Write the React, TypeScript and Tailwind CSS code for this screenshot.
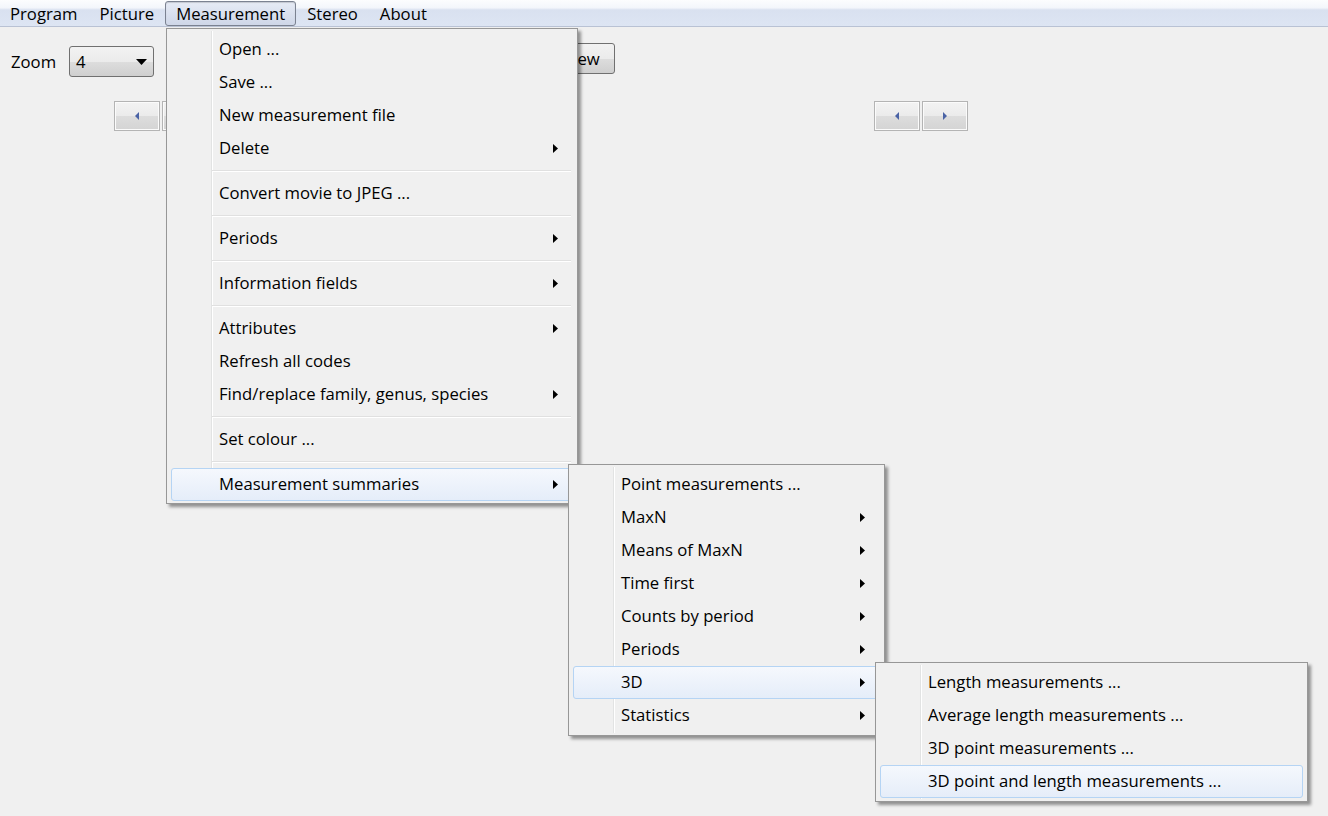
import React from "react";

type Item =
  | { kind: "item"; label: string; sub?: boolean; active?: boolean }
  | { kind: "sep" };

const mainItems: Item[] = [
  { kind: "item", label: "Open ..." },
  { kind: "item", label: "Save ..." },
  { kind: "item", label: "New measurement file" },
  { kind: "item", label: "Delete", sub: true },
  { kind: "sep" },
  { kind: "item", label: "Convert movie to JPEG ..." },
  { kind: "sep" },
  { kind: "item", label: "Periods", sub: true },
  { kind: "sep" },
  { kind: "item", label: "Information fields", sub: true },
  { kind: "sep" },
  { kind: "item", label: "Attributes", sub: true },
  { kind: "item", label: "Refresh all codes" },
  { kind: "item", label: "Find/replace family, genus, species", sub: true },
  { kind: "sep" },
  { kind: "item", label: "Set colour ..." },
  { kind: "sep" },
  { kind: "item", label: "Measurement summaries", sub: true, active: true },
];

const summaryItems: Item[] = [
  { kind: "item", label: "Point measurements ..." },
  { kind: "item", label: "MaxN", sub: true },
  { kind: "item", label: "Means of MaxN", sub: true },
  { kind: "item", label: "Time first", sub: true },
  { kind: "item", label: "Counts by period", sub: true },
  { kind: "item", label: "Periods", sub: true },
  { kind: "item", label: "3D", sub: true, active: true },
  { kind: "item", label: "Statistics", sub: true },
];

const threeDItems: Item[] = [
  { kind: "item", label: "Length measurements ..." },
  { kind: "item", label: "Average length measurements ..." },
  { kind: "item", label: "3D point measurements ..." },
  { kind: "item", label: "3D point and length measurements ...", active: true },
];

function SubArrow() {
  return (
    <svg className="absolute right-[14px] top-[11px]" width="5" height="9" viewBox="0 0 5 9">
      <polygon points="0,0 5,4.5 0,9" fill="#000" />
    </svg>
  );
}

function MenuPanel({ items, className }: { items: Item[]; className: string }) {
  return (
    <div
      className={
        "absolute border border-[#979797] bg-[#f0f0f0] px-[4px] shadow-[3px_3px_3px_rgba(0,0,0,0.4)] " +
        className
      }
    >
      {/* icon gutter */}
      <div className="absolute left-[44px] top-[2px] bottom-[2px] w-[2px] border-l border-[#e2e3e3] bg-[#f0f0f0] border-r border-r-white" />
      {items.map((it, i) =>
        it.kind === "sep" ? (
          <div key={i} className="relative h-[12px]">
            <div className="absolute left-[41px] right-[2px] top-[5px] h-[2px] border-t border-[#e0e0e0] border-b border-b-white" />
          </div>
        ) : (
          <div
            key={i}
            className={
              "relative flex h-[33px] items-center pb-[1px] pl-[48px] " +
              (it.active
                ? "rounded-[3px] border border-[#b5d4f4] bg-[linear-gradient(to_bottom,#f5f8fd,#e5edf9)]"
                : "border border-transparent")
            }
          >
            <span className="-ml-[1px] whitespace-nowrap">{it.label}</span>
            {it.sub && <SubArrow />}
          </div>
        )
      )}
    </div>
  );
}

function ArrowButton({ dir }: { dir: "left" | "right" }) {
  return (
    <div className="flex h-[30px] w-[46px] items-center justify-center border border-[#b4b4b4] bg-[linear-gradient(to_bottom,#f3f3f3_0%,#ebebeb_50%,#dddddd_51%,#d4d4d4_100%)] shadow-[inset_0_0_0_1px_#fbfbfb]">
      <svg width="4" height="8" viewBox="0 0 4 8">
        {dir === "left" ? (
          <polygon points="4,0 0,4 4,8" fill="#4a63a5" />
        ) : (
          <polygon points="0,0 4,4 0,8" fill="#4a63a5" />
        )}
      </svg>
    </div>
  );
}

export default function App() {
  const menus = ["Program", "Picture", "Measurement", "Stereo", "About"];

  return (
    <div
      className="relative h-[816px] w-[1328px] overflow-hidden bg-[#f0f0f0] text-[16.7px] text-black"
      style={{ fontFamily: '"Segoe UI", "Open Sans", "Noto Sans", sans-serif' }}
    >
      {/* Menu bar */}
      <div className="flex h-[27px] items-stretch border-b border-[#b9c2d4] bg-[linear-gradient(to_bottom,#fcfdfe_0%,#f3f6fb_30%,#d9e1f0_38%,#dde5f3_100%)] pt-[1px]">
        <div className="-ml-[1px] flex">
          {menus.map((m) => (
            <div
              key={m}
              className={
                "flex items-center px-[10px] " +
                (m === "Measurement"
                  ? "rounded-[3px] border border-[#7b8291] bg-[linear-gradient(to_bottom,#e6ebf5,#cfd7e8)] shadow-[inset_0_1px_1px_rgba(0,0,0,0.15)]"
                  : "border border-transparent")
              }
            >
              {m}
            </div>
          ))}
        </div>
      </div>

      {/* Toolbar */}
      <div className="flex items-start pt-[16px]">
        <span className="ml-[11px] mt-[6px] w-[58px]">Zoom</span>
        <div className="mt-[3px] flex h-[31px] w-[85px] items-center justify-between rounded-[3px] border border-[#707070] bg-[linear-gradient(to_bottom,#f2f2f2_0%,#ebebeb_50%,#dddddd_51%,#cfcfcf_100%)] pl-[6px] pr-[6px]">
          <span>4</span>
          <svg width="11" height="6" viewBox="0 0 11 6">
            <polygon points="0,0 11,0 5.5,6" fill="#000" />
          </svg>
        </div>
        <div className="ml-[394px] flex h-[31px] w-[67px] items-center justify-center rounded-[3px] border border-[#707070] bg-[linear-gradient(to_bottom,#f2f2f2_0%,#ebebeb_50%,#dddddd_51%,#cfcfcf_100%)]">
          View
        </div>
      </div>

      <div className="mt-[24px] flex">
        <div className="ml-[114px] flex gap-[2px]">
          <ArrowButton dir="left" />
          <ArrowButton dir="right" />
        </div>
        <div className="ml-[666px] flex gap-[2px]">
          <ArrowButton dir="left" />
          <ArrowButton dir="right" />
        </div>
      </div>

      {/* Dropdown menus */}
      <MenuPanel items={mainItems} className="left-[166px] top-[28px] w-[412px] pt-[4px] pb-[2px]" />
      <MenuPanel items={summaryItems} className="left-[568px] top-[464px] w-[317px] pt-[3px] pb-[3px]" />
      <MenuPanel items={threeDItems} className="left-[875px] top-[662px] w-[433px] pt-[3px] pb-[3px]" />
    </div>
  );
}
